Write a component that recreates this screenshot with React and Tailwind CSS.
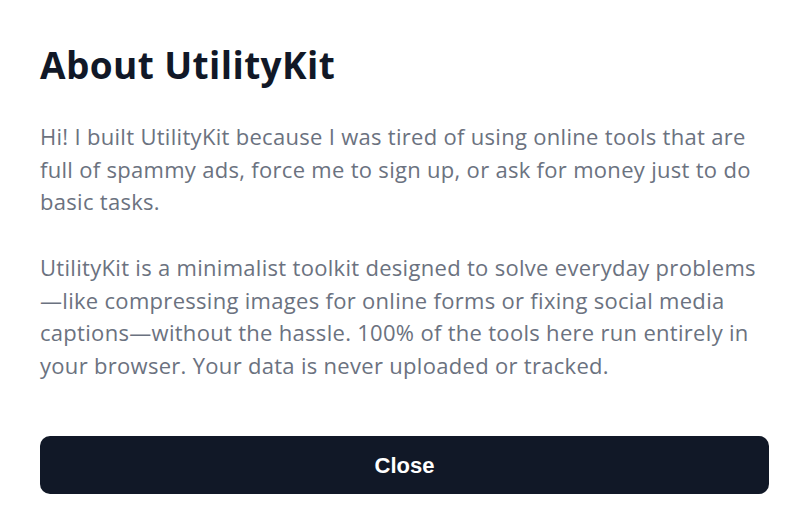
export default function App() {
  return (
    <div className="w-[800px] h-[525px] bg-white pl-10 pt-[45px] overflow-hidden" style={{ fontFamily: '"Open Sans", "Noto Sans", sans-serif' }}>
      <h2 className="text-[37px] leading-[40px] font-bold tracking-[0.4px] text-[#111827]">About UtilityKit</h2>
      <p className="mt-[35px] w-[740px] text-[22px] leading-[32.5px] tracking-[0.3px] text-[#6b7280]">
        Hi! I built UtilityKit because I was tired of using online tools that are<br />
        full of spammy ads, force me to sign up, or ask for money just to do<br />
        basic tasks.
      </p>
      <p className="mt-[33.5px] w-[740px] text-[22px] leading-[32.5px] tracking-[0.3px] text-[#6b7280]">
        UtilityKit is a minimalist toolkit designed to solve everyday problems<br />
        —like compressing images for online forms or fixing social media<br />
        captions—without the hassle. 100% of the tools here run entirely in<br />
        your browser. Your data is never uploaded or tracked.
      </p>
      <button className="mt-[55px] flex items-center justify-center w-[729px] h-[58px] rounded-[10px] bg-[#111827] text-white text-[22px] font-bold" style={{ fontFamily: '"Liberation Sans", Arial, sans-serif' }}>
        Close
      </button>
    </div>
  );
}
